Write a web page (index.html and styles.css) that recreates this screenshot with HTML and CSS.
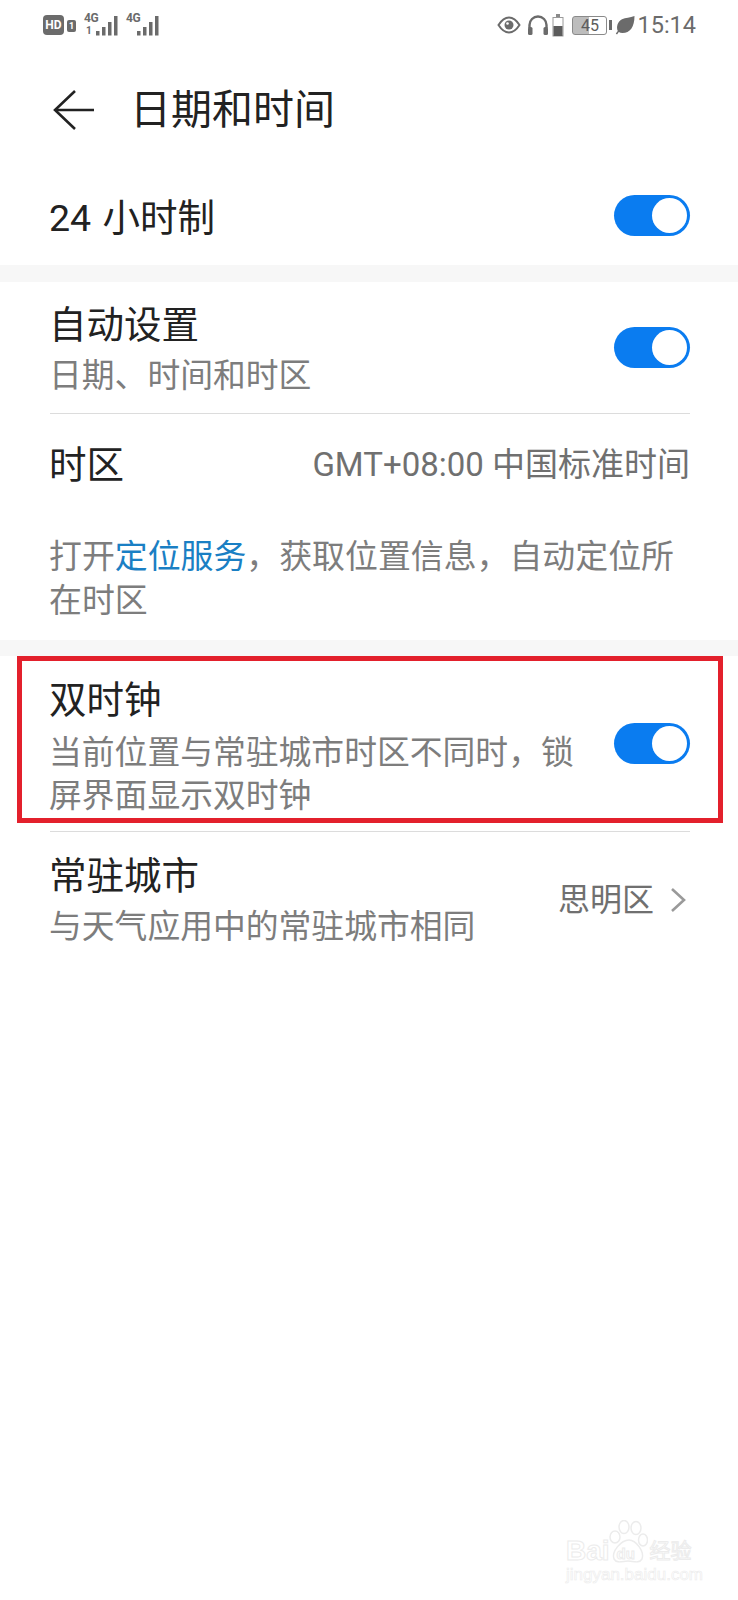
FILE: index.html
```html
<!DOCTYPE html>
<html lang="zh-CN">

<head>
    <meta charset="utf-8">
    <title>日期和时间</title>
    <link rel="stylesheet" href="styles.css">
</head>

<body>
    <div class="page">

        <!--status bar-->
        <div class="status">
            <div class="status-left">
                <span class="hd">HD</span>
                <span class="sim">1</span>
                <div class="signal">
                    <span class="net">4G</span>
                    <span class="net-sub">1</span>
                    <svg class="bars" width="22" height="22" viewBox="0 0 22 22">
                        <rect x="0" y="16" width="3.500" height="4.500" />
                        <rect x="6" y="12" width="3.500" height="8.500" />
                        <rect x="12" y="7" width="3.500" height="13.500" />
                        <rect x="18" y="1" width="3.500" height="19.500" />
                    </svg>
                </div>
                <div class="signal second">
                    <span class="net">4G</span>
                    <svg class="bars" width="22" height="22" viewBox="0 0 22 22">
                        <rect x="0" y="16" width="3.500" height="4.500" />
                        <rect x="6" y="12" width="3.500" height="8.500" />
                        <rect x="12" y="7" width="3.500" height="13.500" />
                        <rect x="18" y="1" width="3.500" height="19.500" />
                    </svg>
                </div>
            </div>
            <div class="status-right">
                <svg width="24" height="18" viewBox="0 0 24 18" fill="none" stroke="#6b6b6b">
                    <path d="M1.5 9C5 3.5 8 1.5 12 1.5S19 3.5 22.500 9C19 14.500 16 16.500 12 16.500S5 14.500 1.500 9Z" stroke-width="2" />
                    <circle cx="12" cy="9" r="4.500" fill="#6b6b6b" stroke="none" />
                    <circle cx="10.500" cy="7.500" r="1.300" fill="#fff" stroke="none" />
                </svg>
                <svg class="phones" width="22" height="22" viewBox="0 0 22 22" fill="none" stroke="#6b6b6b">
                    <path d="M2.500 14V11a8.500 8.500 0 0 1 17 0v3" stroke-width="2.400" />
                    <rect x="1" y="13" width="4.500" height="8" rx="1.500" fill="#6b6b6b" stroke="none" />
                    <rect x="16.500" y="13" width="4.500" height="8" rx="1.500" fill="#6b6b6b" stroke="none" />
                </svg>
                <svg class="cell" width="12" height="23" viewBox="0 0 12 23" fill="none">
                    <rect x="4" y="0" width="4" height="3" fill="#8a8a8a" />
                    <rect x="1" y="3.500" width="10" height="18.500" stroke="#9a9a9a" />
                    <rect x="1.500" y="12" width="9" height="10" fill="#5c5c5c" />
                </svg>
                <div class="battery"><span class="level">45</span></div>
                <span class="nub"></span>
                <svg class="leaf" width="20" height="20" viewBox="0 0 20 20">
                    <path d="M19.500 1C19.500 12 15 18 7.500 18C6 18 4.800 17.600 3.800 17L2 19.500L.8 18.600L2.800 16C1 12 2.500 6.500 7 4.200C10.500 2.400 15 3 19.500 1Z" fill="#6b6b6b" />
                </svg>
                <span class="clock">15:14</span>
            </div>
        </div>

        <!--header-->
        <div class="header">
            <svg class="back" width="42" height="42" viewBox="0 0 42 42" fill="none" stroke="#222" stroke-width="2.600">
                <path d="M22 2L2 21L22 40" />
                <path d="M2 21H41" />
            </svg>
            <span class="page-title">日期和时间</span>
        </div>

        <div class="row row-single">
            <span class="title">24 小时制</span>
            <span class="toggle"></span>
        </div>

        <div class="band"></div>

        <div class="row row-auto">
            <div class="text">
                <div class="title">自动设置</div>
                <div class="sub">日期、时间和时区</div>
            </div>
            <span class="toggle"></span>
        </div>
        <div class="line"></div>

        <div class="row row-zone">
            <span class="title">时区</span>
            <span class="value zone">GMT+08:00 中国标准时间</span>
        </div>

        <p class="note">打开<span class="link">定位服务</span>，获取位置信息，自动定位所在时区</p>

        <div class="band band-low"></div>

        <!--red mark around the dual clock row-->
        <div class="marked">
            <div class="marked-text">
                <div class="title">双时钟</div>
                <div class="sub sub-wrap">当前位置与常驻城市时区不同时，锁屏界面显示双时钟</div>
            </div>
            <span class="toggle"></span>
        </div>
        <div class="line"></div>

        <div class="row row-city">
            <div class="text">
                <div class="title">常驻城市</div>
                <div class="sub">与天气应用中的常驻城市相同</div>
            </div>
            <div class="city">
                <span class="value">思明区</span>
                <svg width="16" height="26" viewBox="0 0 16 26" fill="none" stroke="#9a9a9a" stroke-width="2.600">
                    <path d="M2 2L14 13L2 24" />
                </svg>
            </div>
        </div>

        <!--watermark-->
        <div class="mark">
            <div class="mark-top">
                <span class="mark-brand">Bai</span>
                <div class="mark-paw">
                    <svg width="40" height="44" viewBox="0 0 40 44" fill="none" stroke="#ececec" stroke-width="1.500">
                        <ellipse cx="7" cy="17" rx="5" ry="6" />
                        <ellipse cx="16" cy="7" rx="5" ry="6.500" />
                        <ellipse cx="28" cy="8" rx="5" ry="6.500" />
                        <ellipse cx="35" cy="20" rx="4.500" ry="6" />
                        <path d="M21 20C28 20 37 32 34 39C31 44 25 41 20 41C15 41 9 44 6 39C3 32 13 20 21 20Z" />
                    </svg>
                    <span class="mark-du">du</span>
                </div>
                <span class="mark-cn">经验</span>
            </div>
            <div class="mark-url">jingyan.baidu.com</div>
        </div>

    </div>
</body>

</html>
```

FILE: styles.css
```css
* {
    margin: 0;
    padding: 0;
    box-sizing: border-box;
}

body {
    background: #fff;
    font-family: Roboto, "Noto Sans CJK SC", sans-serif;
    color: #222;
}

.page {
    position: relative;
    width: 738px;
    height: 1600px;
    overflow: hidden;
}

/* status bar */
.status {
    height: 50px;
    padding: 0 43px;
    display: flex;
    justify-content: space-between;
    align-items: center;
}

.status-left,
.status-right {
    display: flex;
    align-items: center;
}

.hd {
    width: 21px;
    height: 20px;
    background: #6b6b6b;
    border-radius: 4px;
    color: #fff;
    font-size: 12px;
    font-weight: 700;
    line-height: 20px;
    text-align: center;
}

.sim {
    width: 9px;
    height: 12px;
    margin: 2px 0 0 3px;
    background: #6b6b6b;
    border-radius: 2px;
    color: #fff;
    font-size: 9px;
    font-weight: 700;
    line-height: 12px;
    text-align: center;
}

.signal {
    position: relative;
    width: 42px;
    height: 24px;
    margin-left: 8px;
}

.second {
    margin-left: 0;
}

.net {
    position: absolute;
    left: 0;
    top: 0;
    color: #6b6b6b;
    font-size: 12px;
    font-weight: 700;
    letter-spacing: -.5px;
    line-height: 10px;
}

.net-sub {
    position: absolute;
    left: 2px;
    top: 13px;
    color: #6b6b6b;
    font-size: 10px;
    font-weight: 700;
    line-height: 10px;
}

.bars {
    position: absolute;
    left: 12px;
    top: 2px;
    fill: #6b6b6b;
}

.second .bars {
    left: 11px;
}

.status-right {
    margin-right: -1px;
}

.phones {
    margin-left: 6px;
}

.cell {
    margin-left: 3px;
}

.battery {
    width: 35px;
    height: 19px;
    margin-left: 8px;
    border: 1px solid #8a8a8a;
    border-radius: 3px;
    background: linear-gradient(90deg, #bdbdbd 48%, #fff 48%);
}

.level {
    display: block;
    color: #5c5c5c;
    font-size: 16px;
    line-height: 17px;
    text-align: center;
}

.nub {
    width: 3px;
    height: 10px;
    margin-left: 2px;
    background: #6b6b6b;
}

.leaf {
    margin-left: 3px;
}

.clock {
    margin-left: 2px;
    color: #6b6b6b;
    font-size: 23.500px;
}

/* header */
.header {
    height: 120px;
    display: flex;
    align-items: center;
    padding-left: 53px;
}

.page-title {
    margin-left: 35px;
    font-size: 41px;
    line-height: 50px;
}

/* rows */
.row {
    display: flex;
    justify-content: space-between;
    align-items: center;
    padding: 0 48px 0 49px;
}

.row-single {
    height: 95px;
    word-spacing: 2px;
}

.row-single .toggle {
    margin-top: -4px;
}

.row-auto {
    height: 131px;
    padding-top: 5px;
}

.row-auto .toggle {
    margin-top: -6px;
}

.row-zone {
    height: 102px;
}

.row-city {
    padding-top: 19px;
}

.title {
    margin-bottom: 0;
    font-size: 37.500px;
    line-height: 50px;
}

.sub {
    padding-top: 1px;
    margin-bottom: -1px;
    color: #7d7d7d;
    font-size: 32.800px;
    line-height: 50px;
}

.value {
    color: #707070;
    font-size: 32px;
    line-height: 50px;
}

.zone {
    font-size: 33px;
}

.band {
    height: 17px;
    background: #f7f7f7;
}

.band-low {
    height: 16px;
}

.line {
    height: 1px;
    margin: 0 48px 0 50px;
    background: #dcdcdc;
}

.note {
    height: 124px;
    padding: 19px 48px 0 49px;
    color: #7d7d7d;
    font-size: 32.900px;
    line-height: 44px;
}

.link {
    color: #1a7fc4;
}

/* dual clock row with its red frame */
.marked {
    height: 167px;
    margin: 0 15px 8px 17px;
    padding: 13px 14px 0 27px;
    display: flex;
    justify-content: space-between;
    align-items: center;
    border: 5px solid #e3202c;
}

.marked-text {
    width: 532px;
}

.sub-wrap {
    margin-top: 6px;
    line-height: 43px;
}

.marked .toggle {
    margin-top: -5px;
    margin-right: 14px;
}

.city {
    display: flex;
    align-items: center;
    gap: 16px;
    margin: -3px 4px 0 0;
}

/* switch */
.toggle {
    position: relative;
    flex: none;
    width: 76px;
    height: 41px;
    border-radius: 21px;
    background: #0a7cf0;
}

.toggle::after {
    content: "";
    position: absolute;
    right: 3px;
    top: 3px;
    width: 35px;
    height: 35px;
    border-radius: 50%;
    background: #fff;
}

/* watermark */
.mark {
    position: absolute;
    left: 566px;
    top: 1520px;
    width: 140px;
    color: transparent;
    -webkit-text-stroke: 1px #ececec;
}

.mark-top {
    display: flex;
    align-items: flex-end;
    height: 44px;
}

.mark-brand {
    font-family: "Liberation Sans", sans-serif;
    font-size: 28px;
    font-weight: 700;
    line-height: 26px;
}

.mark-paw {
    position: relative;
    width: 40px;
    height: 44px;
    margin-left: -2px;
}

.mark-du {
    position: absolute;
    left: 9px;
    bottom: 2px;
    font-family: "Liberation Sans", sans-serif;
    font-size: 15px;
    font-weight: 700;
    line-height: 16px;
}

.mark-cn {
    margin-left: 2px;
    font-size: 21px;
    line-height: 26px;
    white-space: nowrap;
}

.mark-url {
    margin-top: 2px;
    font-family: "Liberation Sans", sans-serif;
    font-size: 17px;
    line-height: 18px;
    white-space: nowrap;
    -webkit-text-stroke: .6px #ececec;
}
```
